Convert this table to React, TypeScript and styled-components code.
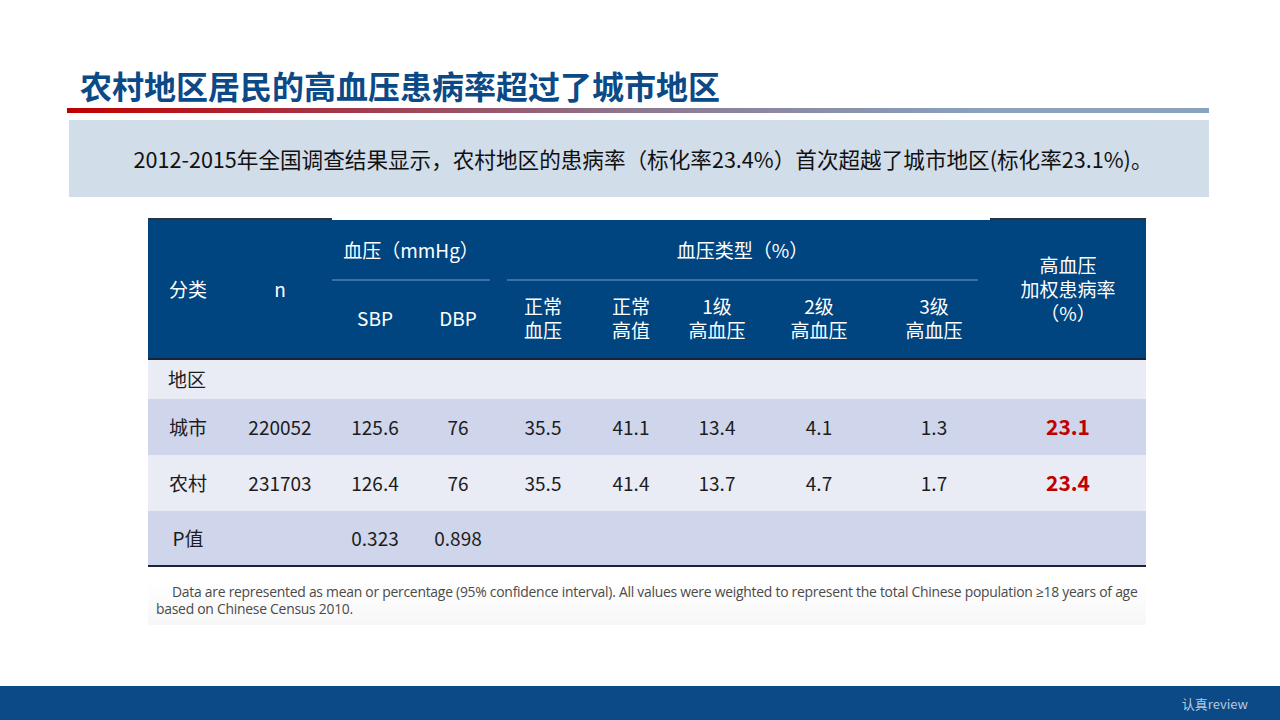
import React from "react";
import styled, {createGlobalStyle} from "styled-components";

const GlobalStyle = createGlobalStyle`
  html, body {
    margin: 0;
    padding: 0;
    background: #ffffff;
  }
  body {
    font-family: "Noto Sans CJK SC", "Noto Sans", sans-serif;
  }
`;

const Slide = styled.div`
  width: 1280px;
  height: 720px;
  display: flex;
  flex-direction: column;
  overflow: hidden;
  background: #ffffff;
`;

const Title = styled.h1`
  margin: 62px 0 0 80px;
  height: 46px;
  font-size: 32px;
  line-height: 46px;
  font-weight: 700;
  color: #0b4a86;
  letter-spacing: 0;
`;

const Rule = styled.div`
  margin: 0 71px 0 67px;
  height: 5px;
  background: linear-gradient(90deg, #c00000 0%, #a33a4c 25%, #8d7891 50%, #88a2bf 80%, #88a3c0 100%);
`;

const Summary = styled.div`
  margin: 7px 71px 0 69px;
  height: 77px;
  background: #d1dde9;
  display: flex;
  align-items: center;
  justify-content: center;
  font-size: 21.6px;
  color: #111;
  padding-left: 8px;
`;

const TableWrap = styled.div`
  margin: 21px 0 0 148px;
  width: 998px;
`;

const Table = styled.table`
  width: 998px;
  border-collapse: collapse;
  table-layout: fixed;
  font-size: 19px;
`;

const Head = styled.thead`
  background: #00457f;
  color: #ffffff;
  border-bottom: 2px solid #1b2433;
`;

const Th = styled.th<{ $top?: boolean }>`
  font-weight: 400;
  line-height: 24px;
  padding: 0;
  text-align: center;
  vertical-align: middle;
  border-top: ${(p) => (p.$top ? "2px solid #2a3340" : "2px solid #ffffff")};
`;

const GroupTh = styled.th`
  font-weight: 400;
  padding: 0;
  height: 61px;
  text-align: center;
  vertical-align: middle;
  border-top: 2px solid #ffffff;
`;

const GroupLabel = styled.div<{ $pl: number; $pr: number }>`
  height: 61px;
  display: flex;
  align-items: center;
  justify-content: center;
  margin: 0 ${(p) => p.$pr}px 0 ${(p) => p.$pl}px;
  border-bottom: 2px solid #3a6fa6;
  box-sizing: border-box;
`;

const SubTh = styled.th`
  font-weight: 400;
  line-height: 24px;
  height: 73px;
  padding: 0 0 4px;
  text-align: center;
  vertical-align: middle;
`;

const Line = styled.span`
  display: block;
`;

const Row = styled.tr<{ $shade: boolean; $h: number }>`
  background: ${(p) => (p.$shade ? "#cfd5ea" : "#e9ebf5")};
  height: ${(p) => p.$h}px;
  color: #1c1c1c;
`;

const Td = styled.td`
  padding: 0 0 2px;
  text-align: center;
  vertical-align: middle;
`;

const LabelTd = styled.td`
  padding: 0 0 2px 20px;
  text-align: left;
  vertical-align: middle;
`;

const Rate = styled.span`
  color: #c00000;
  font-weight: 700;
  font-size: 21px;
`;

const Body = styled.tbody`
  border-bottom: 2px solid #1b2433;
`;

const Note = styled.div`
  margin-top: 14px;
  padding: 2px 8px 8px 8px;
  font-family: "Open Sans", "Liberation Sans", sans-serif;
  font-size: 13.9px;
  line-height: 17px;
  color: #4a4a4a;
  text-indent: 16px;
  letter-spacing: -0.25px;
  background: linear-gradient(180deg, #ffffff 0%, #f7f7f7 100%);
`;

const Spacer = styled.div`
  flex: 1;
`;

const Footer = styled.div`
  height: 34px;
  background: #0b4a86;
  display: flex;
  align-items: center;
  justify-content: flex-end;
  padding-right: 32px;
  font-size: 13px;
  color: #b9c9dc;
`;

interface DataRow {
  name: string;
  n: string;
  sbp: string;
  dbp: string;
  types: string[];
  rate: string;
}

const rows: DataRow[] = [
  {name: "城市", n: "220052", sbp: "125.6", dbp: "76", types: ["35.5", "41.1", "13.4", "4.1", "1.3"], rate: "23.1"},
  {name: "农村", n: "231703", sbp: "126.4", dbp: "76", types: ["35.5", "41.4", "13.7", "4.7", "1.7"], rate: "23.4"},
];

const widths = [80, 104, 86, 80, 90, 86, 86, 118, 112, 156];

const subHeads: string[][] = [
  ["正常", "血压"],
  ["正常", "高值"],
  ["1级", "高血压"],
  ["2级", "高血压"],
  ["3级", "高血压"],
];

export default function App() {
  return (
    <Slide>
      <GlobalStyle />
      <Title>农村地区居民的高血压患病率超过了城市地区</Title>
      <Rule />
      <Summary>2012-2015年全国调查结果显示，农村地区的患病率（标化率23.4%）首次超越了城市地区(标化率23.1%)。</Summary>
      <TableWrap>
        <Table>
          <colgroup>
            {widths.map((w, i) => (
              <col key={i} style={{width: w}} />
            ))}
          </colgroup>
          <Head>
            <tr>
              <Th $top rowSpan={2}>分类</Th>
              <Th $top rowSpan={2}>n</Th>
              <GroupTh colSpan={2}>
                <GroupLabel $pl={0} $pr={8}>血压（mmHg）</GroupLabel>
              </GroupTh>
              <GroupTh colSpan={5}>
                <GroupLabel $pl={9} $pr={12}>血压类型（%）</GroupLabel>
              </GroupTh>
              <Th $top rowSpan={2}>
                <Line>高血压</Line>
                <Line>加权患病率</Line>
                <Line>（%）</Line>
              </Th>
            </tr>
            <tr>
              <SubTh>SBP</SubTh>
              <SubTh>DBP</SubTh>
              {subHeads.map((s) => (
                <SubTh key={s.join("")}>
                  <Line>{s[0]}</Line>
                  <Line>{s[1]}</Line>
                </SubTh>
              ))}
            </tr>
          </Head>
          <Body>
            <Row $shade={false} $h={40}>
              <LabelTd colSpan={10}>地区</LabelTd>
            </Row>
            {rows.map((r, i) => (
              <Row key={r.name} $shade={i % 2 === 0} $h={56}>
                <Td>{r.name}</Td>
                <Td>{r.n}</Td>
                <Td>{r.sbp}</Td>
                <Td>{r.dbp}</Td>
                {r.types.map((t, j) => (
                  <Td key={j}>{t}</Td>
                ))}
                <Td><Rate>{r.rate}</Rate></Td>
              </Row>
            ))}
            <Row $shade $h={55}>
              <Td>P值</Td>
              <Td />
              <Td>0.323</Td>
              <Td>0.898</Td>
              <Td colSpan={6} />
            </Row>
          </Body>
        </Table>
        <Note>
          Data are represented as mean or percentage (95% confidence interval). All values were weighted to represent the total Chinese population ≥18 years of age based on Chinese Census 2010.
        </Note>
      </TableWrap>
      <Spacer />
      <Footer>认真review</Footer>
    </Slide>
  );
}
